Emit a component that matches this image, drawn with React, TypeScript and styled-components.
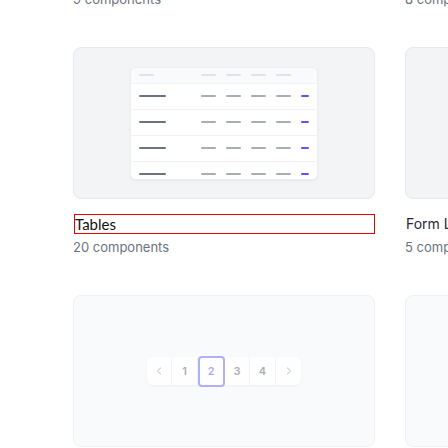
import React from "react";
import styled, { createGlobalStyle } from "styled-components";

const Global = createGlobalStyle`
  html, body { margin: 0; padding: 0; background: #ffffff; }
  body { width: 448px; height: 448px; overflow: hidden; font-family: Inter, "Noto Sans", sans-serif; }
`;

const Grid = styled.div`
  display: grid;
  grid-template-columns: 302px 302px;
  column-gap: 30px;
  row-gap: 39px;
  padding-left: 73px;
  margin-top: -201px;
`;

const Item = styled.div`
  display: flex;
  flex-direction: column;
`;

const Card = styled.div<{ $tone: "dark" | "light" }>`
  box-sizing: border-box;
  height: 152px;
  border-radius: 8px;
  border: 1px solid ${(p) => (p.$tone === "dark" ? "#e7e9ed" : "#f0f1f4")};
  background: ${(p) => (p.$tone === "dark" ? "#f3f4f6" : "#f9fafb")};
  display: flex;
  align-items: center;
  justify-content: center;
  overflow: hidden;
`;

const Title = styled.div<{ $editing?: boolean }>`
  box-sizing: border-box;
  margin-top: 15px;
  height: 20px;
  line-height: 18px;
  border: 1px solid ${(p) => (p.$editing ? "#ee0000" : "transparent")};
  margin-left: ${(p) => (p.$editing ? "1px" : "0")};
  font-family: ${(p) => (p.$editing ? `Lato, "Noto Sans", sans-serif` : `Inter, "Noto Sans", sans-serif`)};
  font-size: ${(p) => (p.$editing ? "15px" : "14px")};
  color: ${(p) => (p.$editing ? "#111111" : "#1f2937")};
  white-space: nowrap;
  overflow: hidden;
`;

const Subtitle = styled.div`
  margin-top: 4px;
  line-height: 18px;
  font-size: 13px;
  color: #6b7280;
  white-space: nowrap;
`;

const Table = styled.div`
  box-sizing: border-box;
  width: 188px;
  height: 113px;
  background: #ffffff;
  border: 1px solid #eceef1;
  border-radius: 6px;
  box-shadow: 0 1px 2px rgba(15, 23, 42, 0.06);
  overflow: hidden;
  display: flex;
  flex-direction: column;
`;

const Row = styled.div<{ $head?: boolean }>`
  flex: none;
  box-sizing: border-box;
  height: ${(p) => (p.$head ? "16px" : "26px")};
  display: flex;
  align-items: center;
  padding: 0 8px 0 8px;
  background: ${(p) => (p.$head ? "#f9fafb" : "#ffffff")};
  border-bottom: 1px solid #f1f2f4;
`;

const Dash = styled.span<{ $w: number; $c: string }>`
  display: block;
  width: ${(p) => p.$w}px;
  height: 2px;
  border-radius: 1px;
  background: ${(p) => p.$c};
`;

const Spacer = styled.span`
  flex: 1;
`;

const Cells = styled.div`
  display: flex;
  gap: 10px;
`;

const Pager = styled.div`
  display: flex;
  align-items: center;
  height: 28px;
  background: #ffffff;
  border-radius: 5px;
  box-shadow: 0 1px 3px rgba(15, 23, 42, 0.05);
  opacity: 0.9;
`;

const PageBtn = styled.div<{ $active?: boolean; $last?: boolean }>`
  box-sizing: border-box;
  width: ${(p) => (p.$active ? "27px" : "25.5px")};
  height: ${(p) => (p.$active ? "31px" : "28px")};
  display: flex;
  align-items: center;
  justify-content: center;
  font-size: 11px;
  font-weight: 600;
  color: ${(p) => (p.$active ? "#a5a1f7" : "#a3a8b1")};
  border-right: ${(p) => (p.$last || p.$active ? "none" : "1px solid #f2f3f5")};
  ${(p) => (p.$active ? `border: 2px solid #aba6f8; border-radius: 4px;` : "")}
`;

const Chevron: React.FC<{ dir: "l" | "r" }> = ({ dir }) => (
  <svg width="6" height="8" viewBox="0 0 6 8" fill="none">
    <path
      d={dir === "l" ? "M4.5 1L1.5 4l3 3" : "M1.5 1l3 3-3 3"}
      stroke="#cfd3d9"
      strokeWidth="1.2"
      strokeLinecap="round"
      strokeLinejoin="round"
    />
  </svg>
);

const TablePreview = () => (
  <Table>
    <Row $head>
      <Dash $w={15} $c="#dfe2e6" />
      <Spacer />
      <Cells>
        {[0, 1, 2, 3].map((i) => (
          <Dash key={i} $w={15} $c="#dfe2e6" />
        ))}
        <Dash $w={8} $c="transparent" />
      </Cells>
    </Row>
    {[0, 1, 2, 3].map((r) => (
      <Row key={r}>
        <Dash $w={27} $c="#6b7280" />
        <Spacer />
        <Cells>
          {[0, 1, 2, 3].map((i) => (
            <Dash key={i} $w={15} $c="#a9aeb6" />
          ))}
          <Dash $w={8} $c="#5b55f0" />
        </Cells>
      </Row>
    ))}
  </Table>
);

const PaginationPreview = () => (
  <Pager>
    <PageBtn>
      <Chevron dir="l" />
    </PageBtn>
    <PageBtn>1</PageBtn>
    <PageBtn $active>2</PageBtn>
    <PageBtn>3</PageBtn>
    <PageBtn>4</PageBtn>
    <PageBtn $last>
      <Chevron dir="r" />
    </PageBtn>
  </Pager>
);

export default function App() {
  return (
    <>
      <Global />
      <Grid>
        <Item>
          <Card $tone="dark" />
          <Title>Badges</Title>
          <Subtitle>9 components</Subtitle>
        </Item>
        <Item>
          <Card $tone="dark" />
          <Title>Stats</Title>
          <Subtitle>8 components</Subtitle>
        </Item>
        <Item>
          <Card $tone="dark">
            <TablePreview />
          </Card>
          <Title $editing>Tables</Title>
          <Subtitle>20 components</Subtitle>
        </Item>
        <Item>
          <Card $tone="dark" />
          <Title>Form Layouts</Title>
          <Subtitle>5 components</Subtitle>
        </Item>
        <Item>
          <Card $tone="light">
            <PaginationPreview />
          </Card>
          <Title>Pagination</Title>
          <Subtitle>6 components</Subtitle>
        </Item>
        <Item>
          <Card $tone="light" />
          <Title>Navbars</Title>
          <Subtitle>11 components</Subtitle>
        </Item>
      </Grid>
    </>
  );
}
